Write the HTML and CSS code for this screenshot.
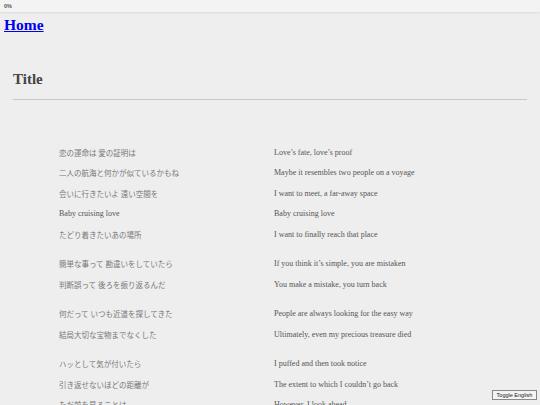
FILE: index.html
```html
<!DOCTYPE html>
<html>
<head>
<meta charset="utf-8">
<link rel="stylesheet" href="styles.css">
</head>
<body>
<div class="topbar"><span class="progress">0%</span></div>
<div class="home"><a href="#">Home</a></div>
<div class="header">
  <h1 class="title">Title</h1>
  <div class="rule"></div>
</div>
<div class="lyrics">
  <div class="stanza">
    <div class="row"><span class="jp">恋の運命は 愛の証明は</span><span class="en">Love’s fate, love’s proof</span></div>
    <div class="row"><span class="jp">二人の航海と何かが似ているかもね</span><span class="en">Maybe it resembles two people on a voyage</span></div>
    <div class="row"><span class="jp">会いに行きたいよ 遠い空間を</span><span class="en">I want to meet, a far-away space</span></div>
    <div class="row"><span class="jp latin">Baby cruising love</span><span class="en">Baby cruising love</span></div>
    <div class="row"><span class="jp">たどり着きたいあの場所</span><span class="en">I want to finally reach that place</span></div>
  </div>
  <div class="stanza">
    <div class="row"><span class="jp">簡単な事って 勘違いをしていたら</span><span class="en">If you think it’s simple, you are mistaken</span></div>
    <div class="row"><span class="jp">判断誤って 後ろを振り返るんだ</span><span class="en">You make a mistake, you turn back</span></div>
  </div>
  <div class="stanza">
    <div class="row"><span class="jp">何だって いつも近道を探してきた</span><span class="en">People are always looking for the easy way</span></div>
    <div class="row"><span class="jp">結局大切な宝物までなくした</span><span class="en">Ultimately, even my precious treasure died</span></div>
  </div>
  <div class="stanza">
    <div class="row"><span class="jp">ハッとして気が付いたら</span><span class="en">I puffed and then took notice</span></div>
    <div class="row"><span class="jp">引き返せないほどの距離が</span><span class="en">The extent to which I couldn’t go back</span></div>
    <div class="row"><span class="jp">ただ前を見ることは</span><span class="en">However, I look ahead</span></div>
  </div>
</div>
<button class="toggle">Toggle English</button>
</body>
</html>
```
FILE: styles.css
```css
html, body {
  margin: 0;
  padding: 0;
  background: #eeeeee;
  font-family: "Liberation Serif", "Noto Sans CJK JP", serif;
  overflow: hidden;
}
.topbar {
  height: 12px;
  background: #f3f3f3;
  box-shadow: 0 1px 2px rgba(0,0,0,0.08);
  display: flex;
  align-items: center;
  padding-left: 4px;
}
.progress {
  font-family: "Liberation Sans", sans-serif;
  font-size: 5.5px;
  font-weight: bold;
  color: #555;
}
.home {
  padding: 4px 0 0 4px;
  line-height: 18px;
}
.home a {
  font-size: 15.5px;
  font-weight: bold;
  color: #0000ee;
  text-decoration: underline;
}
.header {
  padding: 0 13px;
}
.title {
  margin: 36px 0 0 0;
  font-size: 15px;
  line-height: 18px;
  font-weight: bold;
  color: #444;
}
.rule {
  margin-top: 11px;
  height: 1px;
  background: #c8c8c8;
}
.lyrics {
  padding: 42px 0 0 59px;
  display: flex;
  flex-direction: column;
  gap: 9px;
}
.stanza {
  display: flex;
  flex-direction: column;
}
.row {
  display: grid;
  grid-template-columns: 215px 1fr;
  height: 20.5px;
  align-items: center;
}
.jp {
  font-family: "Liberation Serif", "Noto Sans CJK JP", serif;
  font-size: 7.5px;
  color: #777;
}
.jp.latin {
  font-size: 8px;
  color: #555;
}
.en {
  font-size: 8px;
  color: #555;
}
.toggle {
  position: fixed;
  right: 3px;
  bottom: 5px;
  width: 45px;
  height: 10px;
  padding: 0;
  font-family: "Liberation Sans", sans-serif;
  font-size: 5.5px;
  background: #f4f4f4;
  border: 1px solid #888;
  color: #222;
  line-height: 8px;
}
```
